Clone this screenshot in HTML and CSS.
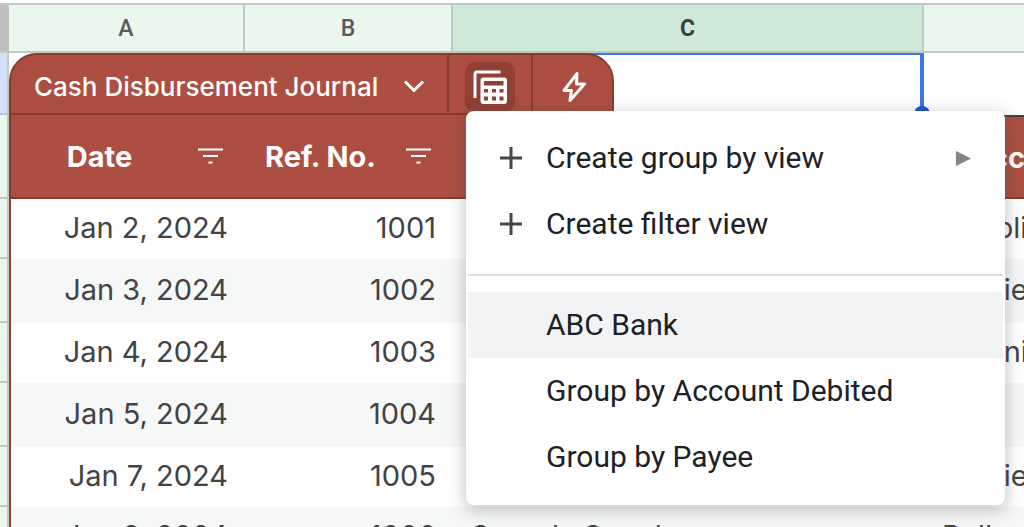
FILE: index.html
```html
<!DOCTYPE html>
<html lang="en">
<head>
<meta charset="utf-8">
<title>Cash Disbursement Journal</title>
<link rel="stylesheet" href="styles.css">
</head>
<body>
<main class="sheet">
  <table class="grid">
    <colgroup>
      <col class="col-index"><col class="col-a"><col class="col-b"><col class="col-c"><col class="col-d">
    </colgroup>
    <thead>
      <tr class="letters">
        <th class="corner"></th>
        <th scope="col">A</th>
        <th scope="col">B</th>
        <th scope="col" class="selected">C</th>
        <th scope="col"></th>
      </tr>
    </thead>
    <tbody>
      <tr class="title-row">
        <th class="index active"></th>
        <td colspan="3" class="title-cell">
          <div class="selection"><span class="handle"></span></div>
          <div class="table-tab">
            <button class="tab-name" type="button">Cash Disbursement Journal
              <svg class="chevron" viewBox="0 0 22 14" aria-hidden="true"><path d="M2 2.500l9 9 9-9"/></svg>
            </button>
            <div class="tab-views">
              <button class="tab-icon pressed" type="button" aria-label="Table views" aria-expanded="true">
                <svg viewBox="0 0 36 36" aria-hidden="true">
                  <path class="line" d="M3 29V5q0-2 2-2h23.500"/>
                  <path class="fill" fill-rule="evenodd" d="M11.500 8.500h20.500q3 0 3 3v20.500q0 3-3 3H11.500q-3 0-3-3v-20.500q0-3 3-3zM12 12v4.500h19.500v-4.500zM12 20v3.500h4V20zM20 20v3.500h4V20zM27.500 20v3.500h4V20zM12 27.500V31.500h4v-4zM20 27.500V31.500h4v-4zM27.500 27.500V31.500h4v-4z"/>
                </svg>
              </button>
            </div>
            <button class="tab-bolt" type="button" aria-label="Automations">
              <svg viewBox="0 0 26 32" aria-hidden="true"><path d="M16 2.500L3 19.500h7.500L9 29.500 23.500 13h-8z"/></svg>
            </button>
          </div>
        </td>
        <td></td>
      </tr>
      <tr class="fields">
        <th class="index"></th>
        <th scope="col"><div class="field"><span>Date</span><button class="filter" type="button" aria-label="Filter Date"><svg viewBox="0 0 26 16" aria-hidden="true"><path d="M0 1.500h25M5 8h15M10.500 14.500h4"/></svg></button></div></th>
        <th scope="col"><div class="field"><span>Ref. No.</span><button class="filter" type="button" aria-label="Filter Ref. No."><svg viewBox="0 0 26 16" aria-hidden="true"><path d="M0 1.500h25M5 8h15M10.500 14.500h4"/></svg></button></div></th>
        <th scope="col"></th>
        <th scope="col" class="account">Account</th>
      </tr>
      <tr class="entry"><th class="index"></th><td class="num">Jan 2, 2024</td><td class="num">1001</td><td></td><td>Supplies</td></tr>
      <tr class="entry band"><th class="index"></th><td class="num">Jan 3, 2024</td><td class="num">1002</td><td></td><td>Utilities</td></tr>
      <tr class="entry"><th class="index"></th><td class="num">Jan 4, 2024</td><td class="num">1003</td><td></td><td>Cleaning</td></tr>
      <tr class="entry band"><th class="index"></th><td class="num">Jan 5, 2024</td><td class="num">1004</td><td></td><td>Rent</td></tr>
      <tr class="entry"><th class="index"></th><td class="num">Jan 7, 2024</td><td class="num">1005</td><td></td><td>Utilities</td></tr>
      <tr class="entry band"><th class="index"></th><td class="num">Jan 8, 2024</td><td class="num">1006</td><td>Speedy Supply</td><td>Bell</td></tr>
    </tbody>
  </table>

  <div class="menu" role="menu">
    <button class="item" role="menuitem" type="button"><svg class="plus" viewBox="0 0 22 22" aria-hidden="true"><path d="M11 0v22M0 11h22"/></svg><span>Create group by view</span><svg class="arrow" viewBox="0 0 15 15" aria-hidden="true"><path d="M0 0l15 7.500L0 15z"/></svg></button>
    <button class="item" role="menuitem" type="button"><svg class="plus" viewBox="0 0 22 22" aria-hidden="true"><path d="M11 0v22M0 11h22"/></svg><span>Create filter view</span></button>
    <hr class="rule">
    <button class="item plain hover" role="menuitem" type="button"><span>ABC Bank</span></button>
    <button class="item plain" role="menuitem" type="button"><span>Group by Account Debited</span></button>
    <button class="item plain" role="menuitem" type="button"><span>Group by Payee</span></button>
  </div>
</main>
</body>
</html>
```
FILE: styles.css
```css
* { box-sizing: border-box; }

body {
  margin: 0;
  overflow: hidden;
  background: #fff;
  font-family: Inter, "Liberation Sans", sans-serif;
  color: #434343;
}

button {
  margin: 0;
  padding: 0;
  border: 0;
  background: none;
  color: inherit;
  font: inherit;
  text-align: left;
}

svg { display: block; flex: none; }

.sheet {
  position: relative;
  height: 100vh;
  padding-top: 3px;
  overflow: hidden;
}

.grid {
  width: 100%;
  table-layout: fixed;
  border-collapse: separate;
  border-spacing: 0;
}

.col-index { width: 9px; }
.col-a { width: 236px; }
.col-b { width: 208px; }
.col-c { width: 471px; }

.grid th, .grid td {
  padding: 0;
  overflow: hidden;
  white-space: nowrap;
}

.letters th {
  height: 50px;
  border: solid #c4c7c5;
  border-width: 2px 2px 2px 0;
  background: #e9f7ec;
  color: #575b5f;
  font: 500 23px Roboto, sans-serif;
}
.letters th:last-child { border-right: 0; }
.letters .corner { background: #c0c0c0; border-right: 0; }
.letters .selected { background: #ceead6; color: #3c4043; font-weight: 700; }

.grid .index {
  background: #e9f7ec;
  border: solid #c4c7c5;
  border-width: 0 2px 2px 0;
}
.grid .active { background: #d3e0fa; }

.title-row > * { height: 62px; }
.grid .title-cell {
  position: relative;
  overflow: visible;
  vertical-align: top;
}

.table-tab {
  position: relative;
  display: flex;
  width: 605px;
  height: 62px;
  border: 2px solid #873b31;
  border-radius: 28px 28px 0 0;
  background: #ac4e42;
  color: #fff;
}
.tab-name {
  display: flex;
  flex: 1;
  align-items: center;
  justify-content: space-between;
  padding: 4px 22px 0 23px;
  font-size: 26px;
  font-weight: 500;
}
.chevron { width: 22px; height: 14px; }
.chevron path { fill: none; stroke: #fff; stroke-width: 3; }
.tab-views {
  display: flex;
  width: 86px;
  justify-content: center;
  border: solid #873b31;
  border-width: 0 2px;
  padding-top: 7px;
}
.tab-icon {
  display: grid;
  place-items: center;
  width: 50px;
  height: 50px;
  border-radius: 10px;
}
.pressed { background: #923f35; }
.tab-icon svg { width: 36px; height: 36px; }
.line { fill: none; stroke: #fff; stroke-width: 3; }
.fill { fill: #fff; }
.tab-bolt {
  display: grid;
  place-items: center;
  width: 79px;
  padding: 6px 0 0 2px;
}
.tab-bolt svg { width: 26px; height: 32px; }
.tab-bolt path { fill: none; stroke: #fff; stroke-width: 3; stroke-linejoin: round; }

.selection {
  position: absolute;
  top: 0;
  right: 0;
  width: 471px;
  height: 57px;
  border: solid #3b78e7;
  border-width: 2px 4px 0 0;
}
.handle {
  position: absolute;
  right: -10px;
  bottom: -12px;
  width: 16px;
  height: 16px;
  border-radius: 50%;
  background: #1a56cc;
}

.fields > * { height: 84px; }
.grid .fields > :not(.index) {
  border-bottom: 2px solid #873b31;
  background: #ac4e42;
  color: #fff;
  font-size: 29px;
  font-weight: 700;
}
.grid .fields > :nth-child(2) { border-left: 2px solid #873b31; }
.grid .fields > .account {
  border-top: 2px solid #434343;
  text-align: left;
  padding-left: 46px;
}
.field {
  display: flex;
  align-items: center;
  justify-content: flex-end;
  padding-right: 21px;
}
.field span { flex: 1; padding-right: 10px; text-align: center; }
.filter svg { width: 26px; height: 16px; }
.filter path { stroke: #fff; stroke-width: 2; }

.entry > * { height: 60px; }
.band:not(:last-child) > * { height: 64px; }
.grid .entry > td {
  padding: 0 0 4px 18px;
  font-size: 29px;
}
.grid .entry > td:nth-child(2) { border-left: 2px solid #983f34; }
.grid .entry > .num { padding-left: 0; padding-right: 17px; text-align: right; }
.band > td { background: #f6f8f7; }

.menu {
  position: absolute;
  top: 111px;
  left: 466px;
  width: 539px;
  padding: 14px 2px 15px;
  border-radius: 8px;
  background: #fff;
  box-shadow: 0 4px 16px 2px rgba(60, 64, 67, .28);
  color: #202124;
  font: 30px Roboto, sans-serif;
}
.item {
  display: flex;
  align-items: center;
  width: 100%;
  height: 66px;
  padding: 0 32px;
}
.item span { flex: 1; padding-bottom: 2px; }
.plain { padding-left: 78px; }
.hover { background: #f1f3f4; }
.plus { width: 22px; height: 22px; margin-right: 24px; }
.plus path { stroke: #444746; stroke-width: 3; }
.arrow { width: 15px; height: 15px; }
.arrow path { fill: #80868b; }
.rule {
  height: 2px;
  margin: 17px 0 16px;
  border: 0;
  background: #dadfdd;
}
```
